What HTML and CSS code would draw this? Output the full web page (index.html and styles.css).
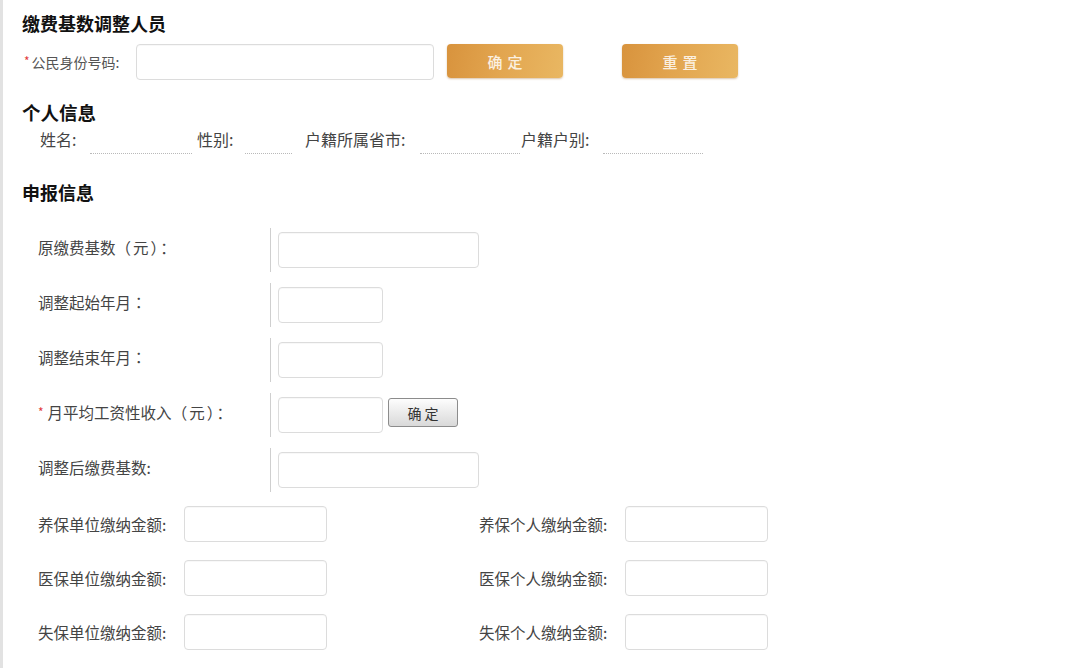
FILE: index.html
```html
<!DOCTYPE html>
<html lang="zh">
<head>
<meta charset="utf-8">
<title>缴费基数调整</title>
<link rel="stylesheet" href="styles.css">
</head>
<body>
<div class="page">
  <h2 class="title t1">缴费基数调整人员</h2>
  <div class="id-row">
    <label class="id-label"><span class="req">*</span>公民身份号码:</label>
    <input class="inp id-inp" type="text">
    <button class="gold-btn btn-ok">确定</button>
    <button class="gold-btn btn-reset">重置</button>
  </div>

  <h2 class="title t2">个人信息</h2>
  <div class="info-row">
    <span class="info-label l-name">姓名:</span><span class="info-val v-name"></span>
    <span class="info-label l-sex">性别:</span><span class="info-val v-sex"></span>
    <span class="info-label l-prov">户籍所属省市:</span><span class="info-val v-prov"></span>
    <span class="info-label l-type">户籍户别:</span><span class="info-val v-type"></span>
  </div>

  <h2 class="title t3">申报信息</h2>
  <div class="decl">
    <div class="decl-row">
      <div class="decl-label">原缴费基数<span class="punct wide">（元）：</span></div>
      <div class="decl-field"><input class="inp w-long" type="text"></div>
    </div>
    <div class="decl-row">
      <div class="decl-label">调整起始年月<span class="punct">：</span></div>
      <div class="decl-field"><input class="inp w-short" type="text"></div>
    </div>
    <div class="decl-row">
      <div class="decl-label">调整结束年月<span class="punct">：</span></div>
      <div class="decl-field"><input class="inp w-short" type="text"></div>
    </div>
    <div class="decl-row">
      <div class="decl-label"><span class="req req2">*</span>月平均工资性收入<span class="punct wide">（元）：</span></div>
      <div class="decl-field"><input class="inp w-short" type="text"><button class="gray-btn">确 定</button></div>
    </div>
    <div class="decl-row">
      <div class="decl-label">调整后缴费基数:</div>
      <div class="decl-field"><input class="inp w-long" type="text"></div>
    </div>
  </div>

  <div class="amounts">
    <span class="amt-label">养保单位缴纳金额:</span><input class="inp amt-inp" type="text">
    <span></span>
    <span class="amt-label">养保个人缴纳金额:</span><input class="inp amt-inp" type="text">
    <span class="amt-label">医保单位缴纳金额:</span><input class="inp amt-inp" type="text">
    <span></span>
    <span class="amt-label">医保个人缴纳金额:</span><input class="inp amt-inp" type="text">
    <span class="amt-label">失保单位缴纳金额:</span><input class="inp amt-inp" type="text">
    <span></span>
    <span class="amt-label">失保个人缴纳金额:</span><input class="inp amt-inp" type="text">
  </div>
</div>
</body>
</html>
```
FILE: styles.css
```css
* { box-sizing: border-box; }
html, body {
  margin: 0;
  padding: 0;
  background: #fff;
}
body {
  font-family: "Noto Sans CJK SC", "Noto Sans", sans-serif;
  color: #444;
  width: 1080px;
  height: 668px;
  overflow: hidden;
}
.page {
  height: 668px;
  border-left: 3px solid #e2e2e2;
  padding: 11px 0 0 19px;
}
.title {
  margin: 0;
  font-size: 18px;
  line-height: 24px;
  font-weight: 700;
  color: #111;
}
.t2 { margin-top: 19px; font-size: 18.5px; }
.t3 { margin-top: 26px; }

.req {
  color: #e23b3b;
  font-size: 12px;
  margin-right: 2px;
  position: relative;
  top: -2px;
}

.id-row {
  display: flex;
  align-items: flex-start;
  margin-top: 9px;
}
.id-label {
  width: 114px;
  padding-left: 2px;
  font-size: 14px;
  line-height: 36px;
  color: #555;
  white-space: nowrap;
}
.inp {
  display: block;
  height: 36px;
  border: 1px solid #dcdcdc;
  border-radius: 4px;
  background: #fff;
  margin: 0;
  padding: 0 6px;
  outline: none;
  box-shadow: inset 0 1px 1px rgba(0,0,0,0.03);
}
.id-inp { width: 298px; }
.gold-btn {
  width: 116px;
  height: 34px;
  border: none;
  border-radius: 4px;
  background: linear-gradient(100deg, #d8933d 0%, #e2a54f 45%, #e9b762 100%);
  box-shadow: 0 1px 2px rgba(150, 90, 20, 0.35);
  color: #fbf0e0;
  font-family: "Noto Sans CJK SC", sans-serif;
  font-size: 15px;
  font-weight: 500;
  letter-spacing: 5px;
  text-indent: 5px;
  padding: 0;
}
.btn-ok { margin-left: 13px; }
.btn-reset { margin-left: 59px; }

.info-row {
  display: flex;
  align-items: flex-start;
  margin-top: 3px;
  font-size: 16px;
  line-height: 24px;
  color: #444;
}
.info-label { display: block; white-space: nowrap; }
.info-val {
  display: block;
  height: 27px;
  border-bottom: 1px dotted #b9b9b9;
}
.l-name { margin-left: 18px; width: 50px; }
.v-name { width: 102px; }
.l-sex { margin-left: 5px; width: 48px; }
.v-sex { width: 47px; }
.l-prov { margin-left: 13px; width: 115px; }
.v-prov { width: 100px; }
.l-type { margin-left: 1px; width: 82px; }
.v-type { width: 100px; }

.decl {
  margin-top: 24px;
  display: flex;
  flex-direction: column;
  gap: 11px;
}
.decl-row {
  display: flex;
  height: 44px;
}
.decl-label {
  width: 249px;
  padding-left: 16px;
  padding-bottom: 6px;
  border-right: 1px solid #cfcfcf;
  display: flex;
  align-items: center;
  font-size: 15.5px;
  color: #444;
  white-space: nowrap;
}
.punct {
  font-family: "Noto Sans CJK TC", "Noto Sans CJK SC", sans-serif;
}
.punct.wide { letter-spacing: 2px; }
.req2 { margin-right: 4px; top: -1px; }
.decl-field {
  display: flex;
  align-items: flex-start;
  padding: 4px 0 0 7px;
}
.w-long { width: 201px; }
.w-short { width: 105px; }
.gray-btn {
  margin: 1px 0 0 5px;
  width: 70px;
  height: 29px;
  border: 1px solid #8c8c8c;
  border-radius: 3px;
  background: linear-gradient(#fdfdfd, #e9e9e9 55%, #d9d9d9);
  color: #333;
  font-family: "Noto Sans CJK SC", sans-serif;
  font-size: 14px;
  padding: 0;
}

.amounts {
  margin-top: 14px;
  padding-left: 16px;
  display: grid;
  grid-template-columns: 146px 143px 152px 146px 143px;
  grid-auto-rows: 36px;
  row-gap: 18px;
  align-items: center;
}
.amt-label {
  font-size: 15.5px;
  color: #444;
  white-space: nowrap;
}
.amt-inp { width: 143px; }
```
